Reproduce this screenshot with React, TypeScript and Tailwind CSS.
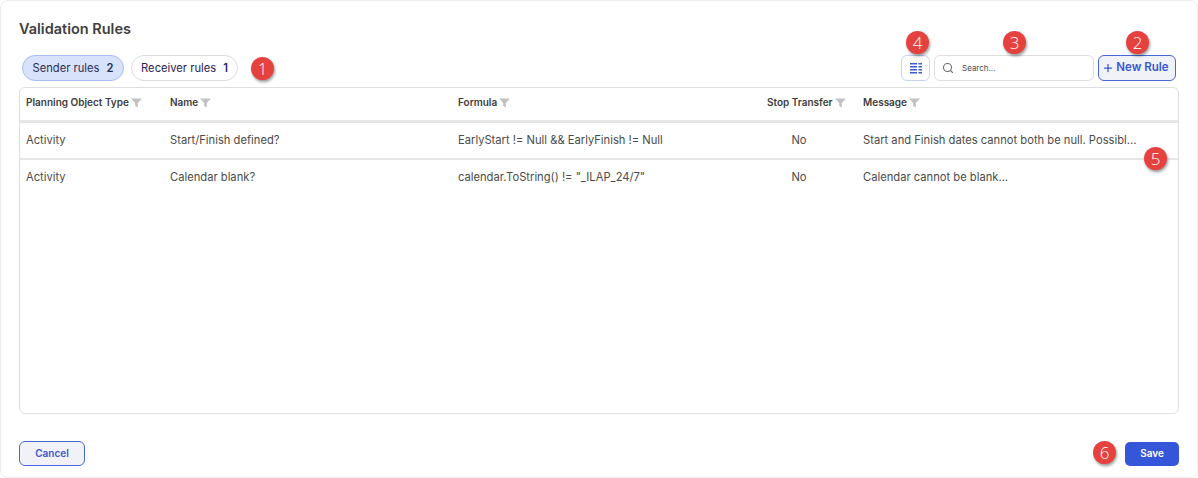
import { Search, Plus } from 'lucide-react';

const rows = [
  {
    type: 'Activity',
    name: 'Start/Finish defined?',
    formula: 'EarlyStart != Null && EarlyFinish != Null',
    stop: 'No',
    message: 'Start and Finish dates cannot both be null. Possibl...',
  },
  {
    type: 'Activity',
    name: 'Calendar blank?',
    formula: 'calendar.ToString() != "_ILAP_24/7"',
    stop: 'No',
    message: 'Calendar cannot be blank...',
  },
];

const FilterIcon = () => (
  <svg viewBox="0 0 10 10" className="ml-[2px] h-[10px] w-[11px] shrink-0 text-[#c2c2c2]" fill="currentColor" preserveAspectRatio="none">
    <path d="M0 0.5h10L6.2 5v4.5L3.8 8V5z" />
  </svg>
);

const Marker = ({ n, className }: { n: number; className: string }) => (
  <div
    className={`absolute flex h-[23px] w-[23px] items-center justify-center rounded-full bg-[#e5423f] text-[17px] font-light text-white shadow-[1px_2px_3px_rgba(0,0,0,0.4)] ${className}`}
    style={{ fontFamily: '"Open Sans", sans-serif' }}
  >
    {n}
  </div>
);

const gridCols = 'grid grid-cols-[144px_288px_302px_78px_1fr] pl-[6px]';

const HeaderCell = ({ label, className = '' }: { label: string; className?: string }) => (
  <div className={`flex items-center whitespace-nowrap text-[10px] font-semibold text-[#3d3d3d] ${className}`}>
    <span>{label}</span>
    <FilterIcon />
  </div>
);

export default function App() {
  return (
    <div
      className="relative flex h-[478px] w-[1198px] flex-col overflow-hidden rounded-[8px] border border-[#ececec] bg-white px-[18px] text-[#4b4b4b]"
      style={{ fontFamily: 'Inter, sans-serif' }}
    >
      <h1 className="mt-[18px] text-[14.5px] font-semibold leading-[20px] text-[#404040]">Validation Rules</h1>

      <div className="mt-[16px] flex items-center justify-between">
        <div className="flex items-center gap-[7px] pl-[3px]">
          <button className="flex h-[26px] w-[102px] items-center justify-center gap-[7px] rounded-full border border-[#a9bdf5] bg-[#d9e2fb] text-[11.2px] text-[#2a2f55]">
            Sender rules <b className="font-semibold">2</b>
          </button>
          <button className="flex h-[26px] w-[107px] items-center justify-center gap-[7px] rounded-full border border-[#dcdcdc] bg-white text-[11.2px] text-[#2a2354]">
            Receiver rules <b className="font-semibold">1</b>
          </button>
        </div>
        <div className="flex items-center">
          <button className="flex h-[26px] w-[29px] items-center justify-center rounded-[6px] border border-[#c5d3f8] bg-white">
            <svg viewBox="0 0 12 11" className="h-[11px] w-[12px] text-[#3a57d6]" fill="currentColor">
              <path d="M0 0h7v1.6H0zM8.5 0H12v1.6H8.5zM0 3h7v1.6H0zM8.5 3H12v1.6H8.5zM0 6h7v1.6H0zM8.5 6H12v1.6H8.5zM0 9h7v1.6H0zM8.5 9H12v1.6H8.5z" />
            </svg>
          </button>
          <div className="ml-[4px] flex h-[26px] w-[160px] items-center rounded-[6px] border border-[#dedede] bg-white pl-[7px]">
            <Search size={12} className="text-[#6e6e6e]" strokeWidth={2.2} />
            <span className="ml-[8px] text-[8px] text-[#4b4b4b]">Search...</span>
          </div>
          <button className="ml-[4px] mr-[3px] flex h-[26px] w-[78px] items-center justify-center gap-[2px] rounded-[6px] border border-[#4766dc] bg-[#f0f2f8] pr-[3px] text-[11.5px] font-semibold text-[#3a57d6]">
            <Plus size={12} strokeWidth={2.5} />
            New Rule
          </button>
        </div>
      </div>

      <div className="mt-[6px] h-[327px] rounded-[6px] border border-[#dfdfdf]">
        <div className={`${gridCols} h-[35px] border-b-[3px] border-[#e6e6e6] pb-[3px]`}>
          <HeaderCell label="Planning Object Type" />
          <HeaderCell label="Name" />
          <HeaderCell label="Formula" />
          <HeaderCell label="Stop Transfer" className="pl-[7px]" />
          <HeaderCell label="Message" className="pl-[25px]" />
        </div>
        {rows.map((row, i) => (
          <div
            key={row.name}
            className={`${gridCols} items-center text-[11.2px] ${i === 0 ? 'h-[37px] border-b-[2px] border-[#e6e6e6]' : 'h-[34px]'}`}
          >
            <div>{row.type}</div>
            <div>{row.name}</div>
            <div>{row.formula}</div>
            <div className="text-center">{row.stop}</div>
            <div className="ml-[25px] whitespace-nowrap">{row.message}</div>
          </div>
        ))}
      </div>

      <div className="mt-[27px] flex items-center justify-between">
        <button className="flex h-[25px] w-[66px] items-center justify-center rounded-[6px] border border-[#4766dc] bg-[#f0f2f8] text-[10px] font-semibold text-[#3a57d6]">
          Cancel
        </button>
        <button className="flex h-[24px] w-[54px] items-center justify-center rounded-[5px] bg-[#3556d8] text-[10px] font-semibold text-white">
          Save
        </button>
      </div>

      <Marker n={1} className="left-[250px] top-[56px]" />
      <Marker n={2} className="left-[1125px] top-[30px]" />
      <Marker n={3} className="left-[1002px] top-[30px]" />
      <Marker n={4} className="left-[905px] top-[30px]" />
      <Marker n={5} className="left-[1143px] top-[146px]" />
      <Marker n={6} className="left-[1092px] top-[440px]" />
    </div>
  );
}
